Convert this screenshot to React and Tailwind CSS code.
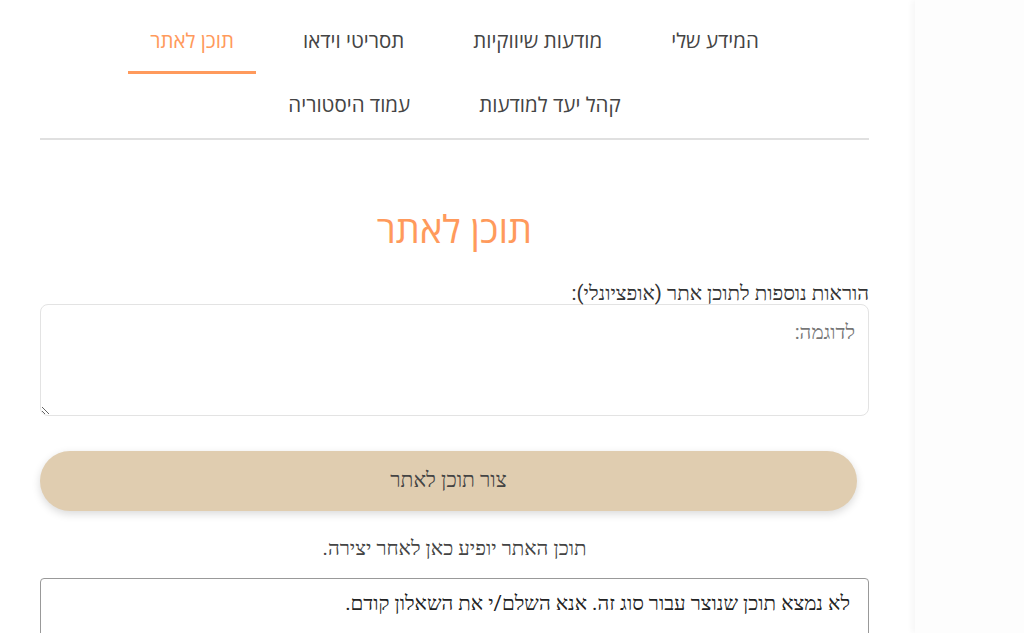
import React from "react";

const row1 = [
  { label: "המידע שלי" },
  { label: "מודעות שיווקיות" },
  { label: "תסריטי וידאו" },
  { label: "תוכן לאתר", active: true },
];
const row2 = [{ label: "קהל יעד למודעות" }, { label: "עמוד היסטוריה" }];

function Tab({ label, active }) {
  return (
    <div
      className={
        "h-16 px-[22px] flex items-center text-[20.5px] font-[family-name:Open_Sans] border-b-[3px] " +
        (active ? "text-[#ff9a5c] border-[#ff9a5c]" : "text-[#444] border-transparent")
      }
    >
      {label}
    </div>
  );
}

export default function App() {
  return (
    <div className="flex h-[633px] w-[1024px] overflow-hidden bg-white font-[family-name:Roboto]">
      <main dir="rtl" className="w-[915px] shrink-0 pl-[40px] pr-[46px]">
        <nav className="flex flex-col pt-[10px] border-b-2 border-[#e0e0e0]">
          <div className="flex justify-center gap-x-[25px]">
            {row1.map((t) => (
              <Tab key={t.label} {...t} />
            ))}
          </div>
          <div className="flex justify-center gap-x-[25px]">
            {row2.map((t) => (
              <Tab key={t.label} {...t} />
            ))}
          </div>
        </nav>

        <h1 className="mt-[66px] text-center text-[38px] leading-[44px] text-[#ff9a5c] font-[family-name:Open_Sans]">תוכן לאתר</h1>

        <label className="mt-[32px] block text-[20.5px] leading-[22px] text-[#333] font-[family-name:Roboto]">
          הוראות נוספות לתוכן אתר (אופציונלי):
        </label>
        <textarea
          className="block w-full h-[112px] border border-[#e3e3e3] rounded-lg px-[13px] pt-4 text-[20.5px] leading-[22px] text-[#333] placeholder:text-[#777] outline-none resize-y font-[family-name:Roboto]"
          placeholder="לדוגמה:"
        />

        <button className="block mr-auto mt-[35px] h-[60px] w-[817px] rounded-full bg-[#e0cdb0] text-[21px] text-[#444] shadow-[0_3px_8px_rgba(0,0,0,0.15)] font-[family-name:Roboto]">
          צור תוכן לאתר
        </button>

        <p className="mt-[26px] text-center text-[20.5px] leading-[22px] text-[#444] font-[family-name:Roboto]">
          תוכן האתר יופיע כאן לאחר יצירה.
        </p>

        <div className="mt-[19px] border border-[#999] rounded-t h-[80px] pr-[18px] pt-[13px] text-[20.5px] leading-[22px] text-[#222] font-[family-name:Roboto]">
          לא נמצא תוכן שנוצר עבור סוג זה. אנא השלם/י את השאלון קודם.
        </div>
      </main>
      <aside className="flex-1 bg-[#fdfdfd] shadow-[-3px_0_6px_rgba(0,0,0,0.04)]" />
    </div>
  );
}
